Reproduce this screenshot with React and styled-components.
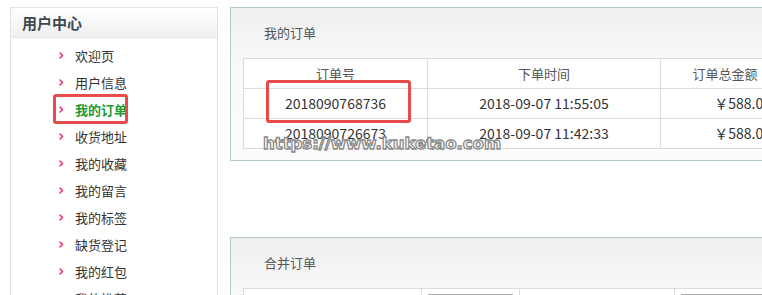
import React from 'react'
import styled, { createGlobalStyle } from 'styled-components'

const GlobalStyle = createGlobalStyle`
  html, body {
    margin: 0;
    padding: 0;
    overflow: hidden;
    background: #fff;
    font-family: "Noto Sans CJK SC", "Noto Sans", sans-serif;
    color: #333;
  }
`

const menu = ['欢迎页', '用户信息', '我的订单', '收货地址', '我的收藏', '我的留言', '我的标签', '缺货登记', '我的红包', '我的推荐', '我的积分']

const orders = [
  { no: '2018090768736', time: '2018-09-07 11:55:05', amount: '￥588.00', marked: true },
  { no: '2018090726673', time: '2018-09-07 11:42:33', amount: '￥588.00' },
]

function Bullet() {
  return (
    <svg width="5" height="7" viewBox="0 0 5 7">
      <path d="M1 1 L3.5 3.5 L1 6" fill="none" stroke="#ee2c74" strokeWidth="1.5" strokeLinecap="round" strokeLinejoin="round" />
    </svg>
  )
}

function App() {
  return (
    <>
      <GlobalStyle />
      <Page>
        <Sidebar>
          <SideHead>用户中心</SideHead>
          <Menu>
            {menu.map((item) => (
              <MenuItem key={item} $active={item === '我的订单'}>
                <Bullet />
                <span>{item}</span>
              </MenuItem>
            ))}
          </Menu>
        </Sidebar>

        <Main>
          <Panel>
            <PanelTitle>我的订单</PanelTitle>
            <OrderTable>
              <thead>
                <tr>
                  <Th $w={183}>订单号</Th>
                  <Th $w={232}>下单时间</Th>
                  <Th>订单总金额</Th>
                </tr>
              </thead>
              <tbody>
                {orders.map((o) => (
                  <tr key={o.no}>
                    <Td>
                      {o.marked && <CellMark />}
                      {o.no}
                    </Td>
                    <Td>{o.time}</Td>
                    <Td $align="right">{o.amount}</Td>
                  </tr>
                ))}
              </tbody>
            </OrderTable>
            <Watermark>https://www.kuketao.com</Watermark>
          </Panel>

          <Panel $tall>
            <PanelTitle>合并订单</PanelTitle>
            <OrderTable>
              <thead>
                <tr>
                  <Th $w={177}></Th>
                  <Th $w={97}><Field /></Th>
                  <Th $w={154}></Th>
                  <Th><Field /></Th>
                </tr>
              </thead>
            </OrderTable>
          </Panel>
        </Main>
      </Page>
    </>
  )
}

const Page = styled.div`
  display: flex;
  align-items: flex-start;
  gap: 12px;
  padding: 7px 0 0 10px;
  width: max-content;
`

const Sidebar = styled.div`
  width: 208px;
  height: 330px;
  box-sizing: border-box;
  border: 1px solid #e3e3e3;
  background: #fff;
`

const SideHead = styled.div`
  height: 29px;
  line-height: 29px;
  padding-left: 11px;
  font-size: 15px;
  font-weight: bold;
  color: #3f4750;
  background: linear-gradient(to bottom, #ffffff, #efefef);
  border-bottom: 1px solid #e6e6e6;
`

const Menu = styled.ul`
  list-style: none;
  margin: 0;
  padding: 4px 0 0 0;
`

const MenuItem = styled.li`
  position: relative;
  display: flex;
  align-items: center;
  height: 27px;
  padding-left: 48px;
  font-size: 13px;
  color: ${(p) => (p.$active ? '#1c9a34' : '#333')};
  font-weight: ${(p) => (p.$active ? 'bold' : 'normal')};

  svg {
    margin-right: 11px;
  }

  ${(p) =>
    p.$active &&
    `
    &::after {
      content: '';
      position: absolute;
      left: 42px;
      top: -2px;
      width: 75px;
      height: 30px;
      box-sizing: border-box;
      border: 3px solid #e84b4b;
      border-radius: 3px;
    }
  `}
`

const Main = styled.div`
  display: flex;
  flex-direction: column;
  gap: 76px;
`

const Panel = styled.div`
  position: relative;
  width: 573px;
  height: ${(p) => (p.$tall ? '120px' : 'auto')};
  box-sizing: border-box;
  border: 1px solid #b2c8c8;
  padding: 0 12px 11px 12px;
  background: linear-gradient(to bottom, #efefef, #f8f8f8 50px, #fcfcfc);
`

const PanelTitle = styled.div`
  height: 50px;
  line-height: 50px;
  padding-left: 21px;
  font-size: 13px;
  color: #555;
`

const OrderTable = styled.table`
  width: 547px;
  border-collapse: collapse;
  table-layout: fixed;
  background: #fff;
  font-size: 14px;
`

const Th = styled.th`
  width: ${(p) => (p.$w ? `${p.$w}px` : 'auto')};
  height: 29px;
  padding: 0;
  border: 1px solid #dcdcdc;
  font-size: 13px;
  font-weight: normal;
  color: #555;
  text-align: center;
  vertical-align: top;
  line-height: 29px;
`

const Td = styled.td`
  position: relative;
  height: 29px;
  padding: 0 18px 0 0;
  border: 1px solid #dcdcdc;
  text-align: ${(p) => p.$align || 'center'};
  color: #333;
  line-height: 29px;
  white-space: nowrap;

  &:first-child, &:nth-child(2) {
    padding: 0;
  }
`

const CellMark = styled.span`
  position: absolute;
  left: 22px;
  top: -9px;
  width: 145px;
  height: 43px;
  box-sizing: border-box;
  border: 3px solid #e84b4b;
  border-radius: 3px;
`

const Field = styled.div`
  margin: 5px 0 0 6px;
  width: 83px;
  height: 22px;
  border: 1px solid #c8c8c8;
  border-top: 2px solid #a9a9a9;
  background: #fff;
`

const Watermark = styled.div`
  position: absolute;
  left: 32px;
  top: 126px;
  font-family: "DejaVu Sans", sans-serif;
  font-weight: bold;
  font-size: 16.5px;
  color: #fff;
  -webkit-text-stroke: 1.3px #8a8a8a;
  pointer-events: none;
  white-space: nowrap;
`

export default App
